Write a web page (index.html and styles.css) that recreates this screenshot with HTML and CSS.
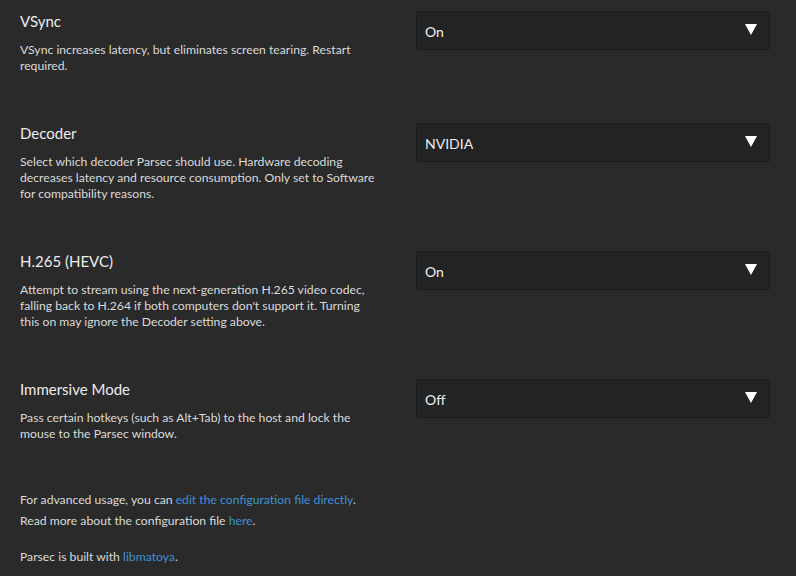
FILE: index.html
```html
<!DOCTYPE html>
<html>
<head>
<meta charset="utf-8">
<link rel="stylesheet" href="styles.css">
</head>
<body>
<div class="page">
  <div class="setting">
    <div class="info">
      <div class="title">VSync</div>
      <div class="desc">VSync increases latency, but eliminates screen tearing. Restart<br>required.</div>
    </div>
    <div class="select"><span class="value">On</span><span class="arrow"></span></div>
  </div>
  <div class="setting">
    <div class="info">
      <div class="title">Decoder</div>
      <div class="desc">Select which decoder Parsec should use. Hardware decoding<br>decreases latency and resource consumption. Only set to Software<br>for compatibility reasons.</div>
    </div>
    <div class="select"><span class="value">NVIDIA</span><span class="arrow"></span></div>
  </div>
  <div class="setting">
    <div class="info">
      <div class="title">H.265 (HEVC)</div>
      <div class="desc">Attempt to stream using the next-generation H.265 video codec,<br>falling back to H.264 if both computers don't support it. Turning<br>this on may ignore the Decoder setting above.</div>
    </div>
    <div class="select"><span class="value">On</span><span class="arrow"></span></div>
  </div>
  <div class="setting">
    <div class="info">
      <div class="title">Immersive Mode</div>
      <div class="desc">Pass certain hotkeys (such as Alt+Tab) to the host and lock the<br>mouse to the Parsec window.</div>
    </div>
    <div class="select"><span class="value">Off</span><span class="arrow"></span></div>
  </div>
  <div class="footer">
    <p>For advanced usage, you can <a href="#">edit the configuration file directly</a>.<br>Read more about the configuration file <a href="#">here</a>.</p>
    <p class="built">Parsec is built with <a href="#">libmatoya</a>.</p>
  </div>
</div>
</body>
</html>
```
FILE: styles.css
```css
html, body {
  margin: 0;
  padding: 0;
  background: #2a2a2a;
}
body {
  width: 796px;
  height: 576px;
  overflow: hidden;
  font-family: Lato, "Liberation Sans", sans-serif;
  color: #e6e6e6;
}
.page {
  padding: 11px 26px 0 20px;
}
.setting {
  display: grid;
  grid-template-columns: 1fr 354px;
  column-gap: 20px;
  align-items: start;
  margin-bottom: 49px;
}
.setting:nth-child(4) {
  margin-bottom: 0;
}
.title {
  font-size: 15px;
  line-height: 20px;
  color: #ececec;
}
.desc {
  margin-top: 11px;
  font-size: 12.2px;
  line-height: 16px;
  color: #dadada;
}
.select {
  box-sizing: border-box;
  height: 39px;
  background: #222325;
  border: 1px solid #1a1b1d;
  border-radius: 3px;
  display: flex;
  align-items: center;
  justify-content: space-between;
  padding: 0 12px 0 8px;
}
.value {
  font-size: 14px;
  color: #ededed;
  padding-top: 2px;
}
.arrow {
  width: 0;
  height: 0;
  border-left: 6.5px solid transparent;
  border-right: 6.5px solid transparent;
  border-top: 11px solid #ffffff;
  margin-top: -2px;
}
.footer {
  margin-top: 47px;
  font-size: 12.2px;
  line-height: 21px;
  color: #dadada;
}
.footer p {
  margin: 0;
}
.footer .built {
  margin-top: 15px;
}
.footer a {
  color: #3d92d6;
  text-decoration: none;
}
```
